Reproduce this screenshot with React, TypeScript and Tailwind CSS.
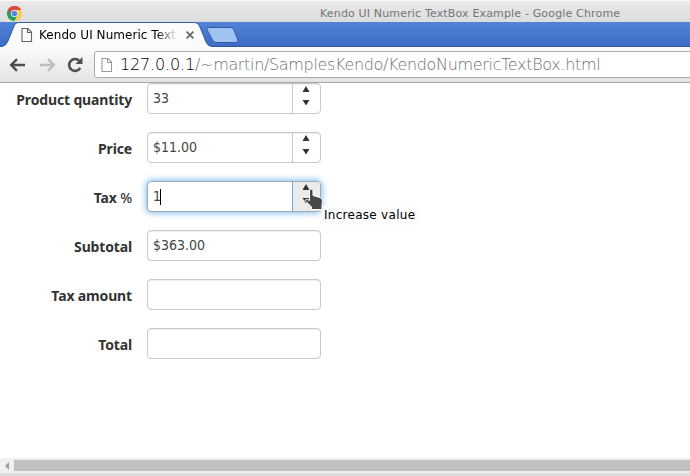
import React from "react";

type Field = { label: string; unit?: string; value: string; spinner?: boolean; active?: boolean };

const fields: Field[] = [
  { label: "Product quantity", value: "33", spinner: true },
  { label: "Price", value: "$11.00", spinner: true },
  { label: "Tax", unit: "%", value: "1", spinner: true, active: true },
  { label: "Subtotal", value: "$363.00" },
  { label: "Tax amount", value: "" },
  { label: "Total", value: "" },
];

function ChromeLogo() {
  return (
    <svg className="h-[15px] w-[15px]" viewBox="0 0 30 30">
      <path d="M15 15 2 7.5A15 15 0 0 1 28 7.5Z" fill="#dc4b3e" />
      <path d="M15 15 2 7.5A15 15 0 0 0 15 30L21.5 18.8Z" fill="#20a162" />
      <path d="M15 8H28.2A15 15 0 0 1 15 30L21 18.5Z" fill="#fdce45" />
      <path d="M2 7.5 8.7 18.8 15 8H28.2A15 15 0 0 0 2 7.5Z" fill="#dc4b3e" />
      <circle cx="15" cy="15" r="7" fill="#f4f4f4" />
      <circle cx="15" cy="15" r="5.4" fill="#4587ef" />
    </svg>
  );
}

function PageIcon({ color }: { color: string }) {
  return (
    <svg className="shrink-0" width="12" height="16" viewBox="0 0 12 16" fill="#fff" stroke={color}>
      <path d="M1 1.5H7L10.5 5V14.5H1Z M6.5 1.5V5.5H10.5" strokeWidth="1.1" />
    </svg>
  );
}

function Arrow({ color, flip }: { color: string; flip?: boolean }) {
  return (
    <svg width="17" height="14" viewBox="0 0 17 14" fill="none" stroke={color} strokeWidth="2.4" className={flip ? "-scale-x-100" : ""}>
      <path d="M8 1.2 2.2 7 8 12.8M2.5 7H16" />
    </svg>
  );
}

function NumericField({ field }: { field: Field }) {
  return (
    <div className="flex h-[31px] items-center">
      <label className="w-[132px] pt-[2px] text-right font-['Noto_Sans',sans-serif] text-[14px] leading-[20px] font-bold tracking-[-0.15px] text-[#333]">
        {field.label}
        {field.unit && <span className="font-medium"> {field.unit}</span>}
      </label>
      <div
        className={
          field.active
            ? "relative ml-[15px] flex h-[31px] w-[174px] rounded-[4px] border border-[#a4a9ad] bg-white shadow-[0_0_6px_1px_#7bbdf2]"
            : "relative ml-[15px] flex h-[31px] w-[174px] rounded-[4px] border border-[#c9c9c9] bg-white shadow-[inset_0_1px_1px_#eeeeee]"
        }
      >
        <div className="flex min-w-0 flex-1 items-center pl-[5px] font-['DejaVu_Sans_Condensed','DejaVu_Sans',sans-serif] text-[14px] text-[#444]">
          <span>{field.value}</span>
          {field.active && <span className="-ml-px h-[16px] w-px bg-black" />}
        </div>
        {field.spinner && (
          <div
            className={
              field.active
                ? "flex w-[28px] justify-center rounded-r-[3px] border-l border-l-[#5daee9] bg-[#ebebeb] pt-[2px]"
                : "flex w-[28px] justify-center border-l border-[#c9c9c9] pt-[2px]"
            }
          >
            <svg width="8" height="20" viewBox="0 0 8 20" fill="#333" className="-translate-x-px">
              <path d="M.5 6 4 0 7.5 6ZM.5 14H7.5L4 19.5Z" />
            </svg>
          </div>
        )}
        {field.active && (
          <>
            <svg className="absolute top-[6px] left-[156px] z-10" width="22" height="23" viewBox="0 0 22 23">
              <path d="M5.5 2Q7 0 9 2V7.5L16 9.5Q18.6 10.3 18.5 13L18 18V21.5H7.5V19L1 12.5Q1.8 10.3 5.5 12.5Z" fill="#484848" stroke="#fff" strokeWidth="1" />
            </svg>
            <div className="absolute top-[24px] left-[174px] h-[19px] w-[96px] bg-[#fcfcfc] pl-[2px] font-['DejaVu_Sans',sans-serif] text-[12px] leading-[18px] tracking-[0.28px] whitespace-nowrap text-black">
              Increase value
            </div>
          </>
        )}
      </div>
    </div>
  );
}

export default function App() {
  return (
    <div className="flex h-[476px] w-[690px] flex-col overflow-hidden bg-white">
      <header className="flex h-[22px] shrink-0 items-center border-t border-[#f9f9f9] bg-linear-to-b from-[#e9e9e9] to-[#dddddd] pl-[7px]">
        <div className="pt-[4px]"><ChromeLogo /></div>
        <div className="ml-[298px] pt-[5px] font-['DejaVu_Sans',sans-serif] text-[11px] tracking-[0.16px] whitespace-nowrap text-[#747474]">
          Kendo UI Numeric TextBox Example - Google Chrome
        </div>
      </header>
      <div className="relative h-[25px] shrink-0 border-b border-[#2c5799] bg-linear-to-b from-[#5283d7] to-[#3d6bc6]">
        <svg className="absolute top-0 left-0" width="242" height="25" viewBox="0 0 242 25">
          <path d="M0 24.5H2Q6 24 8 19L14 4Q15.5.5 18 .5H195Q198 .5 200 5L206 20Q208 24.5 212 24.5V26H0Z" fill="#fbfbfb" stroke="#315fa9" />
          <path d="M208.5 5.5H231Q233 5.5 234 8L237.5 17Q238.5 20.5 235 20.5H216Q213.5 20.5 212 17L207 7.5Q206 5.5 208.5 5.5Z" fill="#9fc2f0" stroke="#335ca3" />
        </svg>
        <div className="relative flex h-[25px] items-center pl-[21px]">
          <PageIcon color="#626262" />
          <div className="ml-[6px] w-[138px] overflow-hidden mask-r-from-85% mask-r-to-100% font-['DejaVu_Sans',sans-serif] text-[12px] leading-[18px] tracking-[0.05px] whitespace-nowrap text-black">
            Kendo UI Numeric TextBox
          </div>
          <svg className="ml-[9px]" width="8" height="8" viewBox="0 0 8 8" stroke="#686868" strokeWidth="1.8">
            <path d="M.6.6 7.4 7.4M7.4.6.6 7.4" />
          </svg>
        </div>
      </div>
      <nav className="flex h-[36px] shrink-0 items-center border-b border-[#a8a8a8] bg-linear-to-b from-[#fbfbfb] to-[#e4e4e4] pl-[9px]">
        <Arrow color="#4d4d4d" />
        <div className="ml-[13px] flex"><Arrow color="#bdbdbd" flip /></div>
        <svg className="ml-[11px]" width="17" height="16" viewBox="0 0 17 16" fill="none">
          <path d="M12.4 4A5.9 5.9 0 1 0 13.2 10.8" stroke="#505050" strokeWidth="2.6" />
          <path d="M15.5 0V7H8.5Z" fill="#505050" />
        </svg>
        <div className="-mr-px ml-[10px] flex h-[27px] min-w-0 flex-1 items-center rounded-l-[3px] border border-[#ababab] bg-white pl-[6px]">
          <PageIcon color="#999" />
          <div className="ml-[7px] font-['DejaVu_Sans_Light','DejaVu_Sans',sans-serif] text-[16px] leading-[20px] tracking-[-0.33px] whitespace-nowrap text-[#707070]">
            <span className="tracking-[-0.15px] text-black">127.0.0.1</span>/~martin/SamplesKendo/KendoNumericTextBox.html
          </div>
        </div>
      </nav>
      <main className="flex h-[375px] shrink-0 flex-col gap-[18px]">
        {fields.map((field) => <NumericField key={field.label} field={field} />)}
      </main>
      <footer className="shrink-0">
        <div className="flex h-[15px] items-center bg-[#f0f0f0]">
          <svg className="ml-[5px]" width="4" height="8" viewBox="0 0 4 8" fill="#a0a0a0"><path d="M4 0V8L0 4Z" /></svg>
          <div className="ml-[5px] h-[11px] flex-1 bg-[#c0c0c0]" />
        </div>
        <div className="h-[3px] bg-[#ddd]" />
      </footer>
    </div>
  );
}
